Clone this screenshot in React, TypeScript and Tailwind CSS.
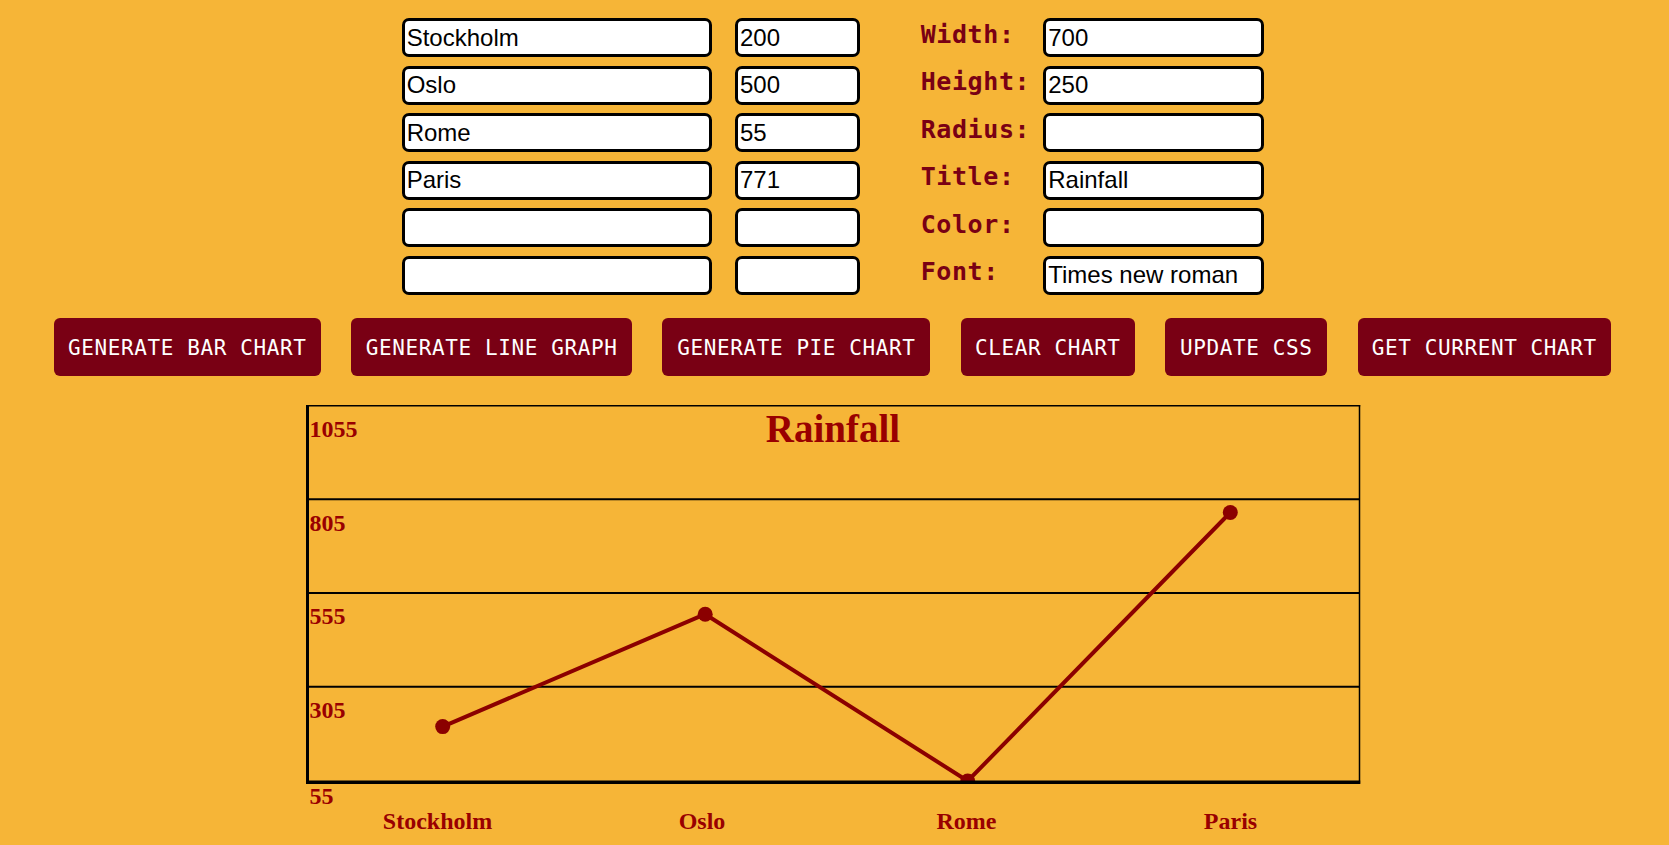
import React from "react";

const rows = [
  { name: "Stockholm", value: "200", label: "Width:", right: "700" },
  { name: "Oslo", value: "500", label: "Height:", right: "250" },
  { name: "Rome", value: "55", label: "Radius:", right: "" },
  { name: "Paris", value: "771", label: "Title:", right: "Rainfall" },
  { name: "", value: "", label: "Color:", right: "" },
  { name: "", value: "", label: "Font:", right: "Times new roman" },
];

const buttons = [
  { text: "GENERATE BAR CHART", w: "w-[267px]" },
  { text: "GENERATE LINE GRAPH", w: "w-[280.7px]" },
  { text: "GENERATE PIE CHART", w: "w-[267.8px]" },
  { text: "CLEAR CHART", w: "w-[174px]" },
  { text: "UPDATE CSS", w: "w-[162px]" },
  { text: "GET CURRENT CHART", w: "w-[253px]" },
];

const inputCls =
  "h-[39px] rounded-[7px] border-[3px] border-black bg-white px-[2px] text-[24px] text-black outline-none font-['Liberation_Sans',Arial,sans-serif]";

const points = [
  { x: 442.7, y: 726.6 },
  { x: 705.2, y: 614.2 },
  { x: 967.7, y: 781 },
  { x: 1230.3, y: 512.5 },
];

const xLabels = [
  { t: "Stockholm", x: 437.5 },
  { t: "Oslo", x: 702 },
  { t: "Rome", x: 966.5 },
  { t: "Paris", x: 1230.5 },
];

const yLabels = [
  { t: "1055", y: 437.3 },
  { t: "805", y: 530.5 },
  { t: "555", y: 624.3 },
  { t: "305", y: 718.2 },
  { t: "55", y: 804.3 },
];

export default function App() {
  return (
    <div className="h-[845px] w-full overflow-hidden bg-[#f6b537] pt-[18.3px] font-['Liberation_Sans',Arial,sans-serif]">
      <div className="flex flex-col gap-[8.5px] pl-[401.7px]">
        {rows.map((r, i) => (
          <div key={i} className="flex h-[39px] items-start">
            <input className={`${inputCls} w-[310.6px]`} defaultValue={r.name} />
            <input className={`${inputCls} ml-[22.7px] w-[125px]`} defaultValue={r.value} />
            <label className="ml-[60.7px] w-[122.6px] whitespace-nowrap pt-[1.5px] text-[25px] font-bold leading-[29px] tracking-[0.6px] text-[#790014] font-['DejaVu_Sans_Mono',monospace]">
              {r.label}
            </label>
            <input className={`${inputCls} w-[220.7px]`} defaultValue={r.right} />
          </div>
        ))}
      </div>

      <div className="mt-[23.5px] flex gap-[30.5px] pl-[53.8px]">
        {buttons.map((b) => (
          <button
            key={b.text}
            className={`${b.w} flex h-[57.5px] shrink-0 items-center justify-center whitespace-nowrap rounded-[6px] bg-[#790014] pt-[4px] text-[21px] tracking-[0.6px] text-white font-['DejaVu_Sans_Mono',monospace]`}
          >
            {b.text}
          </button>
        ))}
      </div>

      <svg
        className="mt-[19.2px] block"
        width={1669}
        height={450}
        viewBox="0 395 1669 450"
      >
        <defs>
          <clipPath id="plot">
            <rect x={309} y={406} width={1050} height={375} />
          </clipPath>
        </defs>
        {[499.2, 592.9, 686.7].map((y) => (
          <line key={y} x1={306} x2={1360} y1={y} y2={y} stroke="#000" strokeWidth={2} />
        ))}
        <g clipPath="url(#plot)">
          <polyline
            points={points.map((p) => `${p.x},${p.y}`).join(" ")}
            fill="none"
            stroke="#8b0000"
            strokeWidth={4}
            strokeLinejoin="round"
          />
          {points.map((p, i) => (
            <circle key={i} cx={p.x} cy={p.y} r={7.5} fill="#8b0000" />
          ))}
        </g>
        <line x1={306} x2={1360.2} y1={405.7} y2={405.7} stroke="#000" strokeWidth={1.5} />
        <line x1={1359.5} x2={1359.5} y1={405} y2={783.7} stroke="#000" strokeWidth={1.5} />
        <line x1={307.5} x2={307.5} y1={405} y2={783.7} stroke="#000" strokeWidth={3} />
        <line x1={306} x2={1360.2} y1={782.2} y2={782.2} stroke="#000" strokeWidth={3.5} />

        <text
          x={833}
          y={442}
          textAnchor="middle"
          fill="#990000"
          fontFamily="'Liberation Serif', 'Times New Roman', serif"
          fontWeight="bold"
          fontSize={39}
        >
          Rainfall
        </text>
        {yLabels.map((l) => (
          <text
            key={l.t}
            x={309.5}
            y={l.y}
            fill="#990000"
            fontFamily="'Liberation Serif', 'Times New Roman', serif"
            fontWeight="bold"
            fontSize={24}
          >
            {l.t}
          </text>
        ))}
        {xLabels.map((l) => (
          <text
            key={l.t}
            x={l.x}
            y={829}
            textAnchor="middle"
            fill="#990000"
            fontFamily="'Liberation Serif', 'Times New Roman', serif"
            fontWeight="bold"
            fontSize={24}
          >
            {l.t}
          </text>
        ))}
      </svg>
    </div>
  );
}
